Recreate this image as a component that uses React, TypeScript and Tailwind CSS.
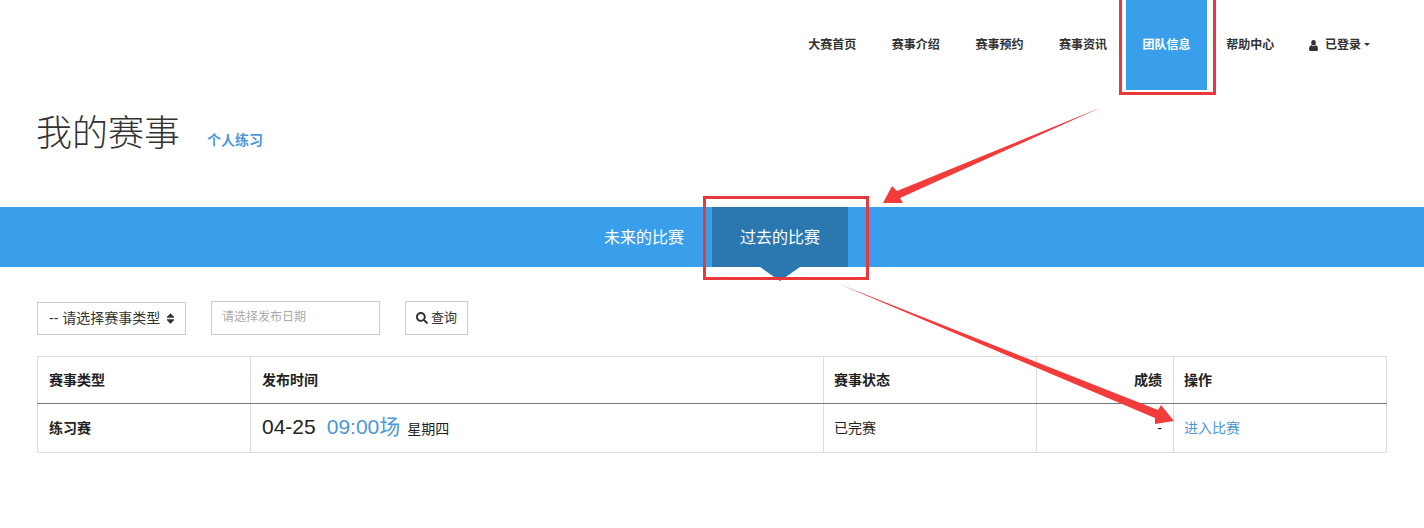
import { FaSearch, FaSort } from "react-icons/fa";

const font = "[font-family:'Liberation_Sans','Noto_Sans_CJK_SC',sans-serif]";

const navItems = ["大赛首页", "赛事介绍", "赛事预约", "赛事资讯", "团队信息", "帮助中心"];

const UserIcon = () => (
  <svg width="9" height="11" viewBox="0 0 9 11" className="mr-[7px] text-[#333]" fill="currentColor">
    <ellipse cx="4.5" cy="2.7" rx="2.3" ry="2.7" />
    <path d="M2.6 5.2C3.2 5.9 3.8 6.2 4.5 6.2S5.8 5.9 6.4 5.2C7.9 5.4 9 6.6 9 9.2 9 10.3 8.3 11 7.4 11H1.6C.7 11 0 10.3 0 9.2 0 6.6 1.100 5.400 2.600 5.200Z" />
  </svg>
);

const Nav = () => (
  <nav className="flex h-[90px] justify-end pr-[54px] text-xs font-bold text-[#333]">
    {navItems.map((item) => (
      <a
        key={item}
        className={
          item === "团队信息"
            ? "flex w-[81px] mx-[1.3px] items-center justify-center bg-[#3a9fea] text-white"
            : "flex w-[83.6px] items-center justify-center"
        }
      >
        {item}
      </a>
    ))}
    <a className="ml-[17px] flex items-center">
      <UserIcon />
      <span>已登录</span>
      <span className="ml-[3px] mb-[1px] border-x-[3px] border-t-[3px] border-x-transparent border-t-[#333]"></span>
    </a>
  </nav>
);

const Tabs = () => (
  <div className="flex h-[60px] justify-center bg-[#3a9fea] text-base text-white">
    <a className="flex items-center px-[28px] pt-[1px]">未来的比赛</a>
    <a className="relative flex items-center bg-[#2b78b0] px-[28px] pt-[1px]">
      过去的比赛
      <span className="absolute left-[48px] top-full border-x-[20px] border-t-[14px] border-x-transparent border-t-[#2b78b0]"></span>
    </a>
  </div>
);

const Filters = () => (
  <div className="flex items-start pt-[34px] pl-[37px] text-[#333]">
    <div className="mt-[1px] flex h-[33px] w-[149px] items-center border border-[#ccc] pb-[1px] pl-[11px] text-sm">
      <span>-- 请选择赛事类型</span>
      <FaSort size={13} className="ml-[4px] text-[#333]" />
    </div>
    <div className="ml-[25px] flex h-[34px] w-[169px] items-center border border-[#ccc] pl-[10px] pb-[2px] text-xs text-[#aaa]">
      请选择发布日期
    </div>
    <button className="ml-[25px] flex h-[34px] w-[63px] items-center border border-[#ccc] pb-[1px] pl-[10px] text-[13px]">
      <FaSearch size={12} className="mr-[3px]" />
      查询
    </button>
  </div>
);

const Results = () => (
  <div className="px-[37px] pt-[21px]">
    <table className="w-[1350px] table-fixed border-collapse text-sm text-[#222]">
      <thead>
        <tr className="h-[47px] font-bold">
          <th className="w-[213px] border border-b-[#777] border-[#ddd] px-[11px] text-left">赛事类型</th>
          <th className="w-[573px] border border-b-[#777] border-[#ddd] px-[11px] text-left">发布时间</th>
          <th className="w-[213px] border border-b-[#777] border-[#ddd] px-[10px] text-left">赛事状态</th>
          <th className="w-[137px] border border-b-[#777] border-[#ddd] px-[11px] text-right">成绩</th>
          <th className="border border-b-[#777] border-[#ddd] px-[10px] text-left">操作</th>
        </tr>
      </thead>
      <tbody>
        <tr className="h-[49px]">
          <td className="border border-[#ddd] px-[11px] pb-[1px] font-bold">练习赛</td>
          <td className="border border-[#ddd] px-[11px] pb-[3px]">
            <span className="text-[21px]">04-25</span>
            <span className="ml-[11px] text-[21px] text-[#4a98d8]">09:00场</span>
            <span className="ml-[7px]">星期四</span>
          </td>
          <td className="border border-[#ddd] px-[10px] pb-[1px]">已完赛</td>
          <td className="border border-[#ddd] px-[11px] pb-[1px] text-right">-</td>
          <td className="border border-[#ddd] px-[10px] pb-[1px] text-[#4a98d8]">进入比赛</td>
        </tr>
      </tbody>
    </table>
  </div>
);

// red marks drawn on top of the screenshot
const Annotations = () => (
  <>
    <div className="absolute left-[1119px] top-[-3px] h-[98px] w-[97px] border-[3px] border-[#e8383b]"></div>
    <div className="absolute left-[703px] top-[196px] h-[84px] w-[166px] border-[3px] border-[#e8383b]"></div>
    <svg className="absolute inset-0" width="1424" height="528" viewBox="0 0 1424 528">
      <polygon points="1102,107 897,191 892,186 883,203 903,203 900,198" fill="#f23c3c" />
      <polygon points="839,284 1158,410 1161,405 1174,421 1155,424 1155,418" fill="#f23c3c" />
    </svg>
  </>
);

export default function App() {
  return (
    <div className={`relative h-[528px] w-[1424px] overflow-hidden bg-white ${font}`}>
      <Nav />
      <div className="flex h-[117px] items-start pl-[36px] pt-[19px]">
        <h1 className="text-[36px] leading-[50px] font-light text-[#333]">我的赛事</h1>
        <a className="ml-[27px] mt-[21px] text-sm leading-5 font-bold text-[#4a98d8]">个人练习</a>
      </div>
      <Tabs />
      <Filters />
      <Results />
      <Annotations />
    </div>
  );
}
